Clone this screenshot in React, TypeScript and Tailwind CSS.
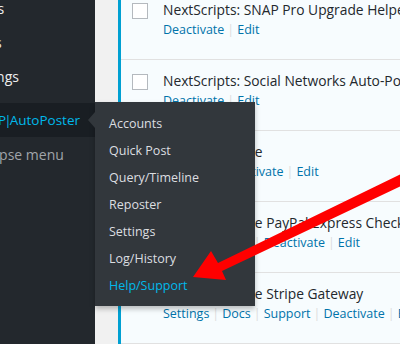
const font = { fontFamily: '"Open Sans", "Noto Sans", Arial, sans-serif' }

interface PluginRow {
  name: string
  actions: string[]
}

const plugins: PluginRow[] = [
  { name: "NextScripts: SNAP Pro Upgrade Helper", actions: ["Deactivate", "Edit"] },
  { name: "NextScripts: Social Networks Auto-Poster", actions: ["Deactivate", "Edit"] },
  { name: "WooCommerce", actions: ["Settings", "Deactivate", "Edit"] },
  { name: "WooCommerce PayPal Express Checkout Gateway", actions: ["Settings", "Docs", "Deactivate", "Edit"] },
  { name: "WooCommerce Stripe Gateway", actions: ["Settings", "Docs", "Support", "Deactivate", "Edit"] },
]

const sideItems = ["Users", "Tools", "Settings"]

const submenu = ["Accounts", "Quick Post", "Query/Timeline", "Reposter", "Settings", "Log/History", "Help/Support"]

function Sidebar() {
  return (
    <div className="w-[95px] shrink-0 bg-[#23282d] overflow-hidden flex flex-col text-[14px]">
      <div className="-mt-[9px] flex flex-col">
        {sideItems.map((label) => (
          <div key={label} className="h-[34px] flex items-center text-[#eeeeee] whitespace-nowrap">
            <span className="-ml-[33px]">{label}</span>
          </div>
        ))}
        <div className="h-[10px]"></div>
        <div className="h-[34px] flex items-center bg-[#191e23] text-[#00b9eb] whitespace-nowrap">
          <span className="-ml-[28px] text-[13.5px]">
            SNAP<span className="-mx-[2px]">|</span>AutoPoster
          </span>
        </div>
        <div className="h-[34px] flex items-center text-[#a0a5aa] whitespace-nowrap">
          <span className="-ml-[33px]">Collapse menu</span>
        </div>
      </div>
    </div>
  )
}

function Plugins() {
  return (
    <div className="flex-1 bg-[#f1f1f1] pl-[23px] overflow-hidden">
      <div className="h-full bg-[#f7fcfe] border-l-[3px] border-[#00a0d2] overflow-hidden">
        <div className="-mt-[11px]">
          {plugins.map((p) => (
            <div key={p.name} className="h-[71px] border-b border-[#e1e1e1] flex pl-[11px] whitespace-nowrap">
              <div className="mt-[14px] w-[16px] h-[16px] bg-white border border-[#b4b9be] shrink-0"></div>
              <div className="ml-[15px] flex flex-col">
                <div className="mt-[11px] h-[20px] leading-[20px] text-[13.8px] text-[#23282d]">{p.name}</div>
                <div className="h-[20px] leading-[20px] text-[12.5px] text-[#0073aa] flex items-center">
                  {p.actions.map((a, i) => (
                    <span key={a} className="flex items-center">
                      {i > 0 && <span className="text-[#dddddd] px-[3px]">|</span>}
                      <span>{a}</span>
                    </span>
                  ))}
                </div>
              </div>
            </div>
          ))}
        </div>
      </div>
    </div>
  )
}

export default function App() {
  return (
    <div className="relative w-[400px] h-[344px] overflow-hidden flex" style={font}>
      <Sidebar />
      <Plugins />

      {/* flyout submenu */}
      <div className="absolute left-[95px] top-[102px] w-[160px] bg-[#32373c] pt-[9px] pb-[6px] shadow-[0_3px_5px_rgba(0,0,0,0.25)]">
        <div className="absolute -left-[7px] top-[10px] w-0 h-0 border-y-[8px] border-y-transparent border-r-[7px] border-r-[#32373c]"></div>
        {submenu.map((s) => (
          <div
            key={s}
            className={`h-[27px] flex items-center pl-[14px] text-[12.5px] ${s === "Help/Support" ? "text-[#00b9eb]" : "text-[#dcdee0]"}`}
          >
            {s}
          </div>
        ))}
      </div>

      {/* red arrow */}
      <svg className="absolute left-0 top-0 pointer-events-none" width="400" height="344" viewBox="0 0 400 344">
        <polygon
          points="405,172 218,263 211,251 193,277 226,280 222,271 405,184"
          fill="#ff0000"
        />
      </svg>
    </div>
  )
}
